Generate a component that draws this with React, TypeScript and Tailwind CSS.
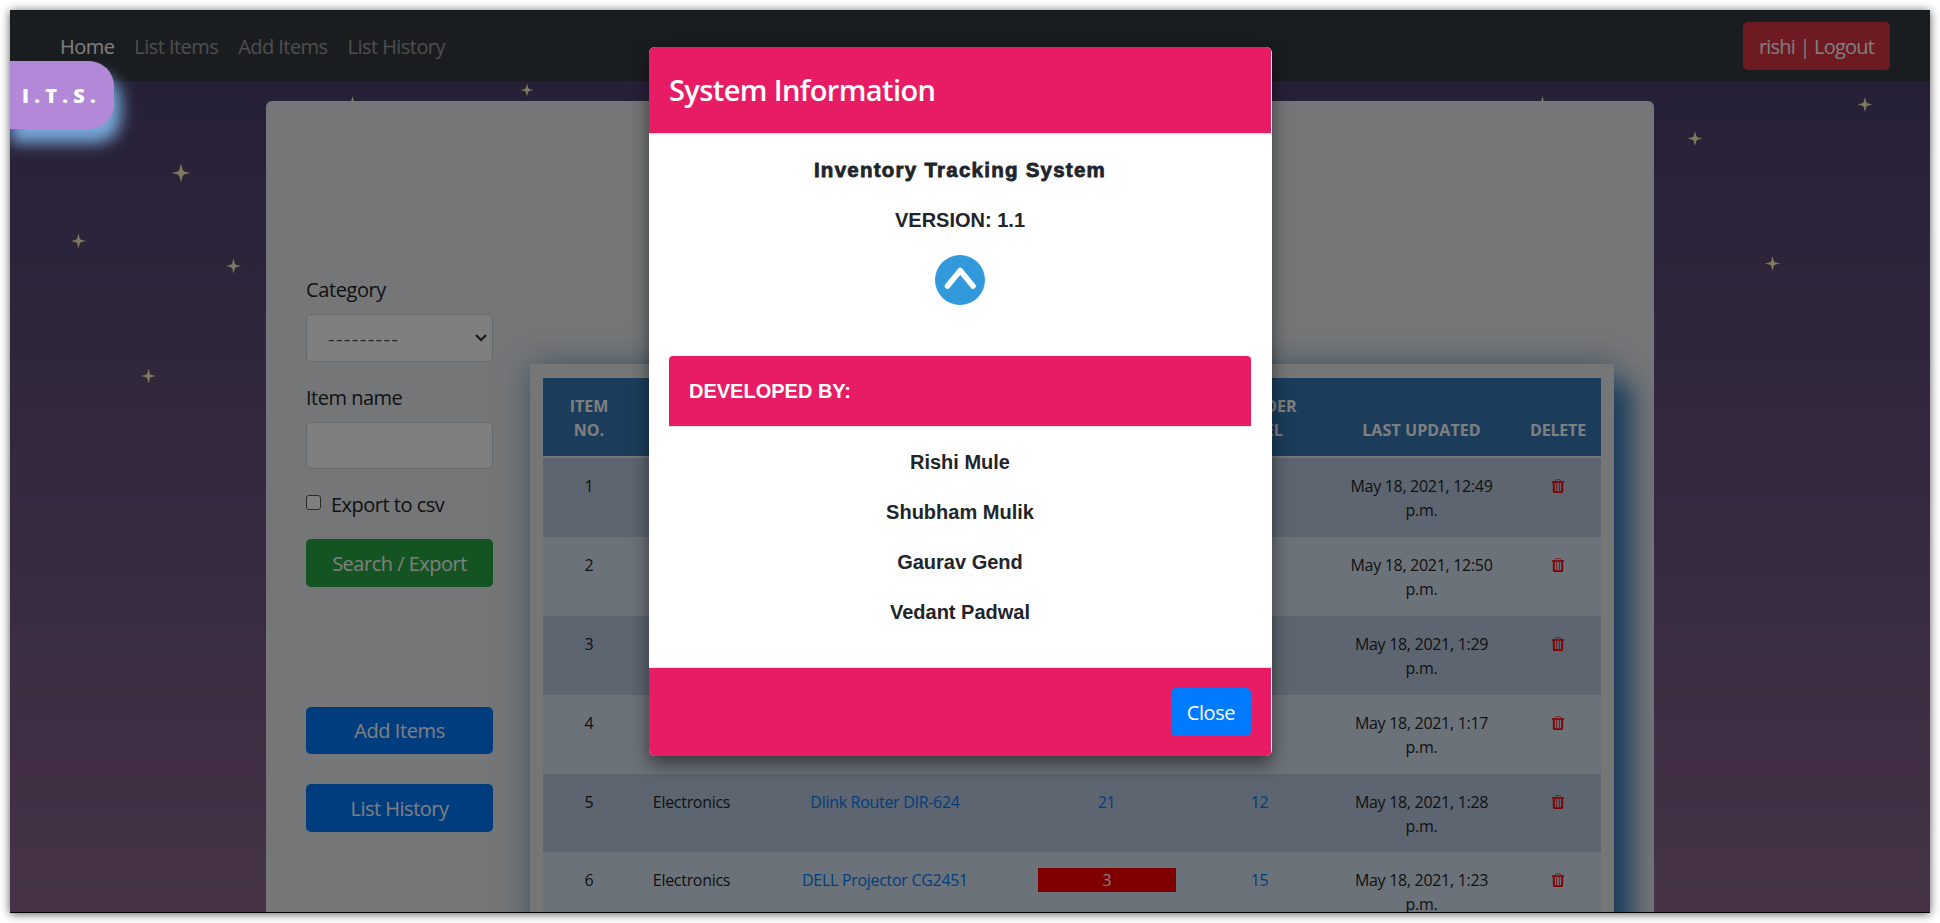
import React from "react";

type Row = { no: number; category: string; name: string; qty: string; reorder: string; updated: string; low?: boolean };

const rows: Row[] = [
  { no: 1, category: "", name: "", qty: "", reorder: "", updated: "12:49" },
  { no: 2, category: "", name: "", qty: "", reorder: "", updated: "12:50" },
  { no: 3, category: "", name: "", qty: "", reorder: "", updated: "1:29" },
  { no: 4, category: "", name: "", qty: "", reorder: "", updated: "1:17" },
  { no: 5, category: "Electronics", name: "Dlink Router DIR-624", qty: "21", reorder: "12", updated: "1:28" },
  { no: 6, category: "Electronics", name: "DELL Projector CG2451", qty: "3", reorder: "15", updated: "1:23", low: true },
];

const stars = [
  [171, 163, 9.5], [68.5, 231, 7.5], [223.5, 256, 7.5], [138.5, 366, 7.5], [342.5, 93, 7],
  [517, 80, 6.5], [1532.5, 93, 7], [1855, 94.5, 7.5], [1685, 128.5, 7.5], [1762.5, 253.5, 7.5],
];

const developers = ["Rishi Mule", "Shubham Mulik", "Gaurav Gend", "Vedant Padwal"];

const columns = "grid grid-cols-[92px_113px_274px_169px_137px_187px_86px]";

function Trash() {
  return (
    <svg viewBox="0 0 12 14" className="h-[14px] w-[12px]" fill="none" stroke="#ff0000">
      <path d="M3.5 2.5V1.4Q3.5.6 4.5.6h3q1 0 1 .8v1.1" strokeWidth="1" opacity=".7" />
      <path d="M0 3h12" strokeWidth="1.6" />
      <path d="M1.8 3.5v8.7q0 .9.9.9h6.6q.9 0 .9-.9V3.5" strokeWidth="1.9" />
      <path d="M4.6 4v8M7.4 4v8" strokeWidth=".8" />
    </svg>
  );
}

function Stars() {
  return (
    <svg className="absolute inset-0 h-full w-full" fill="#fff0c0">
      {stars.map(([x, y, r], i) => (
        <path
          key={i}
          transform={`translate(${x} ${y}) scale(${r})`}
          d="M0-1 .17-.33 .33-.17 1 0 .33.17 .17.33 0 1-.17.33-.33.17-1 0-.33-.17-.17-.33Z"
        />
      ))}
    </svg>
  );
}

function Navbar() {
  return (
    <nav className="relative flex h-[71px] items-center justify-between bg-[#343a40] pr-10 pl-[50px]">
      <div className="flex gap-[20px] pt-0.5 tracking-[-0.55px] text-white/50">
        <a className="text-white">Home</a>
        <a>List Items</a>
        <a>Add Items</a>
        <a>List History</a>
      </div>
      <button className="h-12 w-[147px] rounded-[5px] bg-[#dc3545] pt-0.5 tracking-[-0.8px] text-white">rishi | Logout</button>
    </nav>
  );
}

function Sidebar() {
  return (
    <aside className="flex w-[187px] shrink-0 flex-col tracking-[-0.4px] text-[#212529]">
      <label className="h-[24px] leading-[24px]">Category</label>
      <div className="mt-[12px] flex h-12 items-center justify-between rounded-[5px] border border-[#ced4da] bg-white pr-[5px] pl-[21px] text-[#495057]">
        <span className="pt-0.5 tracking-[1.5px]">---------</span>
        <svg viewBox="0 0 12 8" className="h-2 w-3" fill="none" stroke="#3c3c44" strokeWidth="2.4">
          <path d="M1 1l5 5 5-5" />
        </svg>
      </div>
      <label className="mt-[24px] h-[24px] leading-[24px] tracking-[-0.5px]">Item name</label>
      <div className="mt-[12px] h-[47px] rounded-[5px] border border-[#ced4da] bg-white" />
      <label className="mt-[24px] flex h-[24px] items-center leading-[24px] tracking-[-0.5px]">
        <span className="mr-[10px] mb-[5px] h-[15px] w-[15px] rounded-[3px] border border-[#55555a] bg-white" />
        Export to csv
      </label>
      <button className="mt-[22px] h-12 rounded-[5px] bg-[#28a745] pt-0.5 tracking-[-0.5px] text-white">Search / Export</button>
      <button className="mt-[120px] h-[47px] rounded-[5px] bg-[#007bff] text-white">Add Items</button>
      <button className="mt-[30px] h-12 rounded-[5px] bg-[#007bff] pt-0.5 tracking-[-0.5px] text-white">List History</button>
    </aside>
  );
}

function ItemTable() {
  return (
    <section className="h-[700px] w-[1084px] shrink-0 bg-[#e9ecef] px-[13px] pt-[14px] text-center text-base leading-6 text-[#212529] shadow-[0_0_28px_rgba(51,122,183,0.55),19px_18px_24px_-2px_#337ab7]">
      <div className={`${columns} h-[78px] items-end bg-[#367ab6] pb-[14px] font-bold text-white`}>
        <span className="px-4">ITEM NO.</span>
        <span>CATEGORY</span>
        <span>ITEM NAME</span>
        <span className="px-4">QUANTITY IN STORE</span>
        <span className="px-6">REORDER LEVEL</span>
        <span className="tracking-[0.1px]">LAST UPDATED</span>
        <span className="tracking-[-0.2px]">DELETE</span>
      </div>
      <div className="mt-[2px]">
        {rows.map((r) => (
          <div key={r.no} className={`${columns} h-[78.9px] items-start pt-[16px] tracking-[-0.3px] odd:bg-[#b8cbe0] even:bg-[#d9e5f2]`}>
            <span>{r.no}</span>
            <span>{r.category}</span>
            <span className="text-[#007bff]">{r.name}</span>
            <span className={r.low ? "mr-[15px] ml-4 bg-[#ff0000] text-white" : "text-[#007bff]"}>{r.qty}</span>
            <span className="text-[#007bff]">{r.reorder}</span>
            <span className="px-4">May 18, 2021, {r.updated} p.m.</span>
            <span className="flex h-6 items-center justify-center"><Trash /></span>
          </div>
        ))}
      </div>
    </section>
  );
}

function Modal() {
  return (
    <div className="absolute top-[37px] left-[639px] flex h-[709px] w-[623px] flex-col overflow-hidden rounded-[6px] bg-white text-[#212529] shadow-[0_8px_18px_rgba(0,0,0,0.5)]">
      <header className="mr-px flex h-[86px] shrink-0 items-center bg-[#e81c64] px-5 text-[29px] font-semibold tracking-[-0.6px] text-white">
        System Information
      </header>
      <div className="flex flex-1 flex-col items-center border-y border-[#dee2e6] pt-[21px] pr-[21px] pl-5 font-['Liberation_Sans',sans-serif] font-bold">
        <p className="h-[30px] text-[20.5px] leading-[30px] tracking-[1.25px] [-webkit-text-stroke:0.8px_#212529]">Inventory Tracking System</p>
        <p className="mt-5 h-[30px] leading-[30px]">VERSION: 1.1</p>
        <svg viewBox="0 0 50 50" className="mt-5 h-[50px] w-[50px]">
          <circle cx="25" cy="25" r="25" fill="#3399dd" />
          <path d="M12.5 31 25.2 15.5 38 31" fill="none" stroke="white" strokeWidth="5.6" strokeLinecap="round" strokeLinejoin="round" />
        </svg>
        <div className="mt-[51px] flex h-[71px] w-full shrink-0 items-center rounded-t-[4px] border-b border-[#dee2e6] bg-[#e81c64] px-5 text-white">DEVELOPED BY:</div>
        <div className="mt-5 flex flex-col gap-5 text-center leading-[30px]">
          {developers.map((d) => <p key={d}>{d}</p>)}
        </div>
      </div>
      <footer className="mr-px flex h-[88px] shrink-0 items-center justify-end bg-[#e81c64] pr-5">
        <button className="h-12 w-20 rounded-[5px] bg-[#007bff] pt-0.5 tracking-[-0.4px] text-white">Close</button>
      </footer>
    </div>
  );
}

export default function App() {
  return (
    <div className="h-[923px] w-[1940px] bg-white p-[10px] font-['Open_Sans',sans-serif] text-[20px]">
      <div className="h-[903px] w-[1920px] shadow-[0_1px_9px_rgba(0,0,0,0.65)]">
        <div className="relative h-full w-full overflow-hidden bg-linear-to-b from-[#483e6c] to-[#8c668e]">
          <Stars />
          <Navbar />
          <main className="relative mt-5 ml-[256px] flex h-[850px] w-[1388px] overflow-hidden rounded-[6px] bg-[#e9ecef] pl-10">
            <div className="pt-[177px]"><Sidebar /></div>
            <div className="ml-[37px] pt-[263px]"><ItemTable /></div>
          </main>
          <div className="absolute inset-0 border-b border-black bg-black/50" />
          <div className="absolute top-[51px] left-[-6px] flex h-[68px] w-[110px] items-center rounded-r-[25px] bg-[#b388d8] pt-0.5 pl-[18px] font-extrabold tracking-[5.2px] text-white shadow-[7px_14px_15px_#78a9da]">
            I.T.S.
          </div>
          <Modal />
        </div>
      </div>
    </div>
  );
}
